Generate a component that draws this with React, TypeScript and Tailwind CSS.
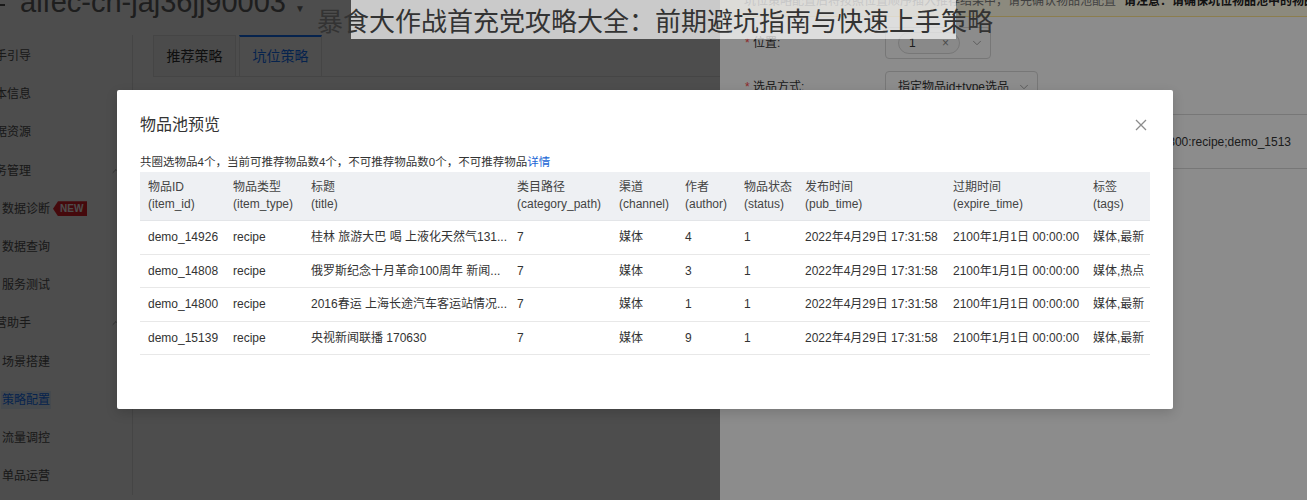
import { ChevronDown, ChevronUp } from 'lucide-react'

const menu = [
  { label: '新手引导', top: true },
  { label: '基本信息', top: true },
  { label: '数据资源', top: true },
  { label: '业务管理', top: true, arrow: true },
  { label: '数据诊断', badge: true },
  { label: '数据查询' },
  { label: '服务测试' },
  { label: '运营助手', top: true, arrow: true },
  { label: '场景搭建' },
  { label: '策略配置', active: true },
  { label: '流量调控' },
  { label: '单品运营' },
]

const columns = [
  ['物品ID', '(item_id)'],
  ['物品类型', '(item_type)'],
  ['标题', '(title)'],
  ['类目路径', '(category_path)'],
  ['渠道', '(channel)'],
  ['作者', '(author)'],
  ['物品状态', '(status)'],
  ['发布时间', '(pub_time)'],
  ['过期时间', '(expire_time)'],
  ['标签', '(tags)'],
]

const items = [
  ['demo_14926', 'recipe', '桂林 旅游大巴 喝 上液化天然气131...', '7', '媒体', '4', '1', '2022年4月29日 17:31:58', '2100年1月1日 00:00:00', '媒体,最新'],
  ['demo_14808', 'recipe', '俄罗斯纪念十月革命100周年 新闻...', '7', '媒体', '3', '1', '2022年4月29日 17:31:58', '2100年1月1日 00:00:00', '媒体,热点'],
  ['demo_14800', 'recipe', '2016春运 上海长途汽车客运站情况...', '7', '媒体', '1', '1', '2022年4月29日 17:31:58', '2100年1月1日 00:00:00', '媒体,最新'],
  ['demo_15139', 'recipe', '央视新闻联播 170630', '7', '媒体', '9', '1', '2022年4月29日 17:31:58', '2100年1月1日 00:00:00', '媒体,最新'],
]

// column widths of the preview table
const cols = 'grid grid-cols-[85px_78px_206px_102px_66px_59px_61px_148px_140px_65px]'

function Sidebar() {
  return (
    <aside className="w-[133px] shrink-0 border-r border-[#e8e8e8] pt-[2px]">
      {menu.map((m) => (
        <div key={m.label} className="relative flex h-[38.2px] items-center overflow-hidden text-[12px] text-[#555]">
          {m.top ? (
            <span className="-ml-[17px] whitespace-nowrap">{m.label}</span>
          ) : m.active ? (
            <span className="ml-[1px] whitespace-nowrap bg-[#e6f4ff] px-[1px] text-[#1677ff]">{m.label}</span>
          ) : (
            <span className="ml-[2px] whitespace-nowrap">{m.label}</span>
          )}
          {m.badge && (
            <span className="ml-[3px] flex h-[15px] items-center bg-[#e8202a] pl-[7px] pr-[4px] text-[10px] font-bold leading-none text-white [clip-path:polygon(5px_0,100%_0,100%_100%,5px_100%,0_50%)]">
              NEW
            </span>
          )}
          {m.arrow && <ChevronUp size={12} strokeWidth={1.5} className="absolute left-[110px] text-[#888]" />}
        </div>
      ))}
    </aside>
  )
}

function Drawer() {
  return (
    <div className="absolute inset-y-0 left-[720px] right-0 bg-white text-[12px] text-[#333]">
      <div className="-mt-[14px] flex h-[31px] items-center gap-[8px] border-b border-[#ffe58f] bg-[#fffbe6] pl-[16px] whitespace-nowrap">
        <span className="h-[14px] w-[14px] rounded-full bg-[#faad14]" />
        <span className="text-[#777]">坑位策略配置后将按照位置顺序插入推荐结果中，请先确认物品池配置</span>
        <span className="font-bold text-[#222]">请注意：请确保坑位物品池中的物品均为可推荐物品，</span>
      </div>
      <div className="pl-[25px] pt-[10px]">
        <div className="flex h-[32px] items-center">
          <div className="w-[140px]">
            <span className="text-[#ff4d4f]">*</span> 位置:
          </div>
          <div className="flex h-[32px] w-[106px] items-center justify-between rounded-[4px] border border-[#d9d9d9] pl-[12px] pr-[6px]">
            <span className="flex h-[22px] w-[62px] items-center justify-between rounded-full border border-[#d9d9d9] bg-[#fafafa] px-[10px]">
              <span>1</span>
              <span className="text-[#888]">×</span>
            </span>
            <ChevronDown size={14} strokeWidth={1.5} className="text-[#999]" />
          </div>
        </div>
        <div className="mt-[12px] flex h-[32px] items-center">
          <div className="w-[140px]">
            <span className="text-[#ff4d4f]">*</span> 选品方式:
          </div>
          <div className="flex h-[32px] w-[153px] items-center justify-between rounded-[4px] border border-[#d9d9d9] pl-[12px] pr-[6px]">
            <span className="whitespace-nowrap">指定物品id+type选品</span>
            <ChevronDown size={14} strokeWidth={1.5} className="text-[#999]" />
          </div>
        </div>
        <div className="mt-[11px] ml-[140px] flex h-[55px] items-center justify-end overflow-hidden whitespace-nowrap border-y border-[#d9d9d9] pr-[16px]">
          demo_14926:recipe;demo_14808:recipe;demo_14800:recipe;demo_1513
        </div>
      </div>
    </div>
  )
}

function PreviewModal() {
  return (
    <div className="absolute left-[117px] top-[90px] h-[319px] w-[1056px] rounded-[2px] bg-white px-[23px] pt-[24px] text-[#333] shadow-[0_4px_12px_rgba(0,0,0,0.15)]">
      <div className="flex h-[22px] items-center justify-between">
        <h2 className="text-[16px] leading-[22px]">物品池预览</h2>
        <svg width="12" height="12" viewBox="0 0 12 12" className="mr-[3px]">
          <path d="M1 1L11 11M11 1L1 11" stroke="#8c8c8c" strokeWidth="1.3" />
        </svg>
      </div>
      <p className="mt-[17px] text-[11.5px] leading-[18px]">
        共圈选物品4个，当前可推荐物品数4个，不可推荐物品数0个，不可推荐物品
        <a href="#" className="text-[#1a66d6]">详情</a>
      </p>
      <div className="mt-[1px] text-[12px]">
        <div className={`${cols} border-b border-[#e3e5e8] bg-[#eef0f3] py-[7px] leading-[17px] text-[#444]`}>
          {columns.map(([zh, en]) => (
            <div key={en} className="px-[8px] whitespace-nowrap">
              <div>{zh}</div>
              <div>{en}</div>
            </div>
          ))}
        </div>
        {items.map((row) => (
          <div key={row[0]} className={`${cols} h-[33.5px] items-center border-b border-[#e8e8e8]`}>
            {row.map((cell, i) => (
              <div key={i} className="overflow-hidden whitespace-nowrap px-[8px]">
                {cell}
              </div>
            ))}
          </div>
        ))}
      </div>
    </div>
  )
}

export default function App() {
  return (
    <div className="relative h-[500px] w-[1307px] overflow-hidden bg-white font-['Liberation_Sans','Noto_Sans_CJK_SC',sans-serif]">
      <header className="flex h-[35px] items-start">
        <span className="mt-[4px] h-[2px] w-[5px] bg-[#555]" />
        <span className="-mt-[12px] ml-[15px] text-[29px] leading-none text-[#666]">aifec-cn-jaj36jj90003</span>
        <span className="ml-[9px] mt-[1px] text-[10px] text-[#777]">▼</span>
      </header>
      <div className="flex">
        <Sidebar />
        <main className="flex-1 pl-[20px]">
          <div className="flex items-end gap-[3px] border-b border-[#e8e8e8] text-[14px]">
            <div className="flex h-[41px] w-[83px] items-center justify-center border border-b-0 border-[#e8e8e8] bg-[#fafafa] text-[#333]">
              推荐策略
            </div>
            <div className="flex h-[41px] w-[83px] items-center justify-center border-x border-t-2 border-[#e8e8e8] border-t-[#1677ff] bg-white text-[#1677ff]">
              坑位策略
            </div>
          </div>
        </main>
      </div>

      {/* drawer mask + drawer */}
      <div className="absolute inset-0 bg-black/45" />
      <Drawer />

      {/* modal mask + modal */}
      <div className="absolute inset-0 bg-black/45" />
      <PreviewModal />

      {/* caption overlay */}
      <div className="absolute left-[351px] top-0 h-[39px] w-[605px] bg-white/70" />
      <div className="absolute left-[317px] top-[5px] whitespace-nowrap text-[26px] leading-[34px] text-[#333]">
        暴食大作战首充党攻略大全：前期避坑指南与快速上手策略
      </div>
    </div>
  )
}
